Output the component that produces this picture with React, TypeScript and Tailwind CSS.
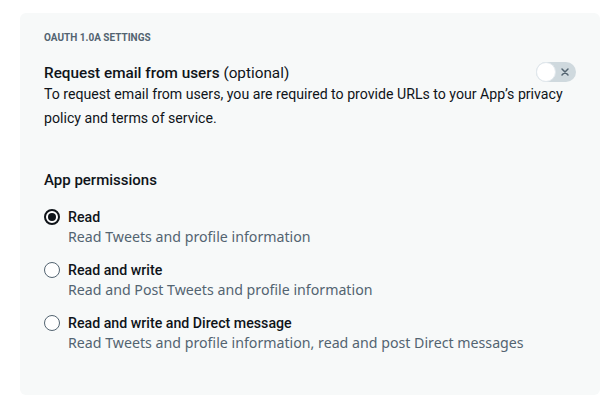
import { useState } from 'react';

const options = [
  { id: 'read', label: 'Read', desc: 'Read Tweets and profile information' },
  { id: 'write', label: 'Read and write', desc: 'Read and Post Tweets and profile information' },
  { id: 'dm', label: 'Read and write and Direct message', desc: 'Read Tweets and profile information, read and post Direct messages' },
];

export default function App() {
  const [perm, setPerm] = useState('read');

  return (
    <div className="min-h-screen bg-white pt-[13px] pl-[20px] pr-[16px]" style={{ fontFamily: 'Roboto, "Liberation Sans", sans-serif' }}>
      <div className="bg-[#f7f9f9] rounded-md h-[382px] pl-[24px] pr-[24px] pt-[19px]">
        {/* Header */}
        <div className="text-[10px] font-bold text-[#536471] leading-[12px]">OAUTH 1.0A SETTINGS</div>

        {/* Email toggle */}
        <div className="mt-[19px] flex items-center justify-between">
          <div className="text-[15.3px] text-[#0f1419] leading-[20px]">
            <span className="font-medium">Request email from users</span> <span>(optional)</span>
          </div>
          <div className="w-[40px] h-[20px] rounded-full bg-[#cfd9de] relative mt-[-2px]">
            <div className="absolute left-0 top-0 w-[20px] h-[20px] rounded-full bg-white border border-[#e1e8ed]" />
            <svg className="absolute right-[6px] top-[5px]" width="10" height="10" viewBox="0 0 10 10">
              <path d="M2 2 L8 8 M8 2 L2 8" stroke="#536471" strokeWidth="1.5" strokeLinecap="round" />
            </svg>
          </div>
        </div>
        <p className="text-[14.15px] text-[#0f1419] leading-[24px] mt-[-1px]">
          To request email from users, you are required to provide URLs to your App’s privacy policy and terms of service.
        </p>

        {/* Permissions */}
        <div className="mt-[40px] text-[15px] font-medium text-[#0f1419] leading-[20px]">App permissions</div>
        <div className="mt-[17px] flex flex-col gap-[13px]">
          {options.map(o => {
            const selected = perm === o.id;
            return (
              <label key={o.id} className="flex items-start gap-[8px] cursor-pointer" onClick={() => setPerm(o.id)}>
                <span
                  className={`mt-[2px] w-[16px] h-[16px] rounded-full flex items-center justify-center shrink-0 bg-white ${
                    selected ? 'border-2 border-[#0f1419]' : 'border border-[#536471]'
                  }`}
                >
                  {selected && <span className="w-[8px] h-[8px] rounded-full bg-[#0f1419]" />}
                </span>
                <span className="flex flex-col">
                  <span className="text-[14.2px] font-medium text-[#0f1419] leading-[20px]">{o.label}</span>
                  <span className="text-[14.2px] text-[#536471] leading-[20px]" style={{ fontFamily: '"Noto Sans", "Open Sans", sans-serif' }}>
                    {o.desc}
                  </span>
                </span>
              </label>
            );
          })}
        </div>
      </div>
    </div>
  );
}
